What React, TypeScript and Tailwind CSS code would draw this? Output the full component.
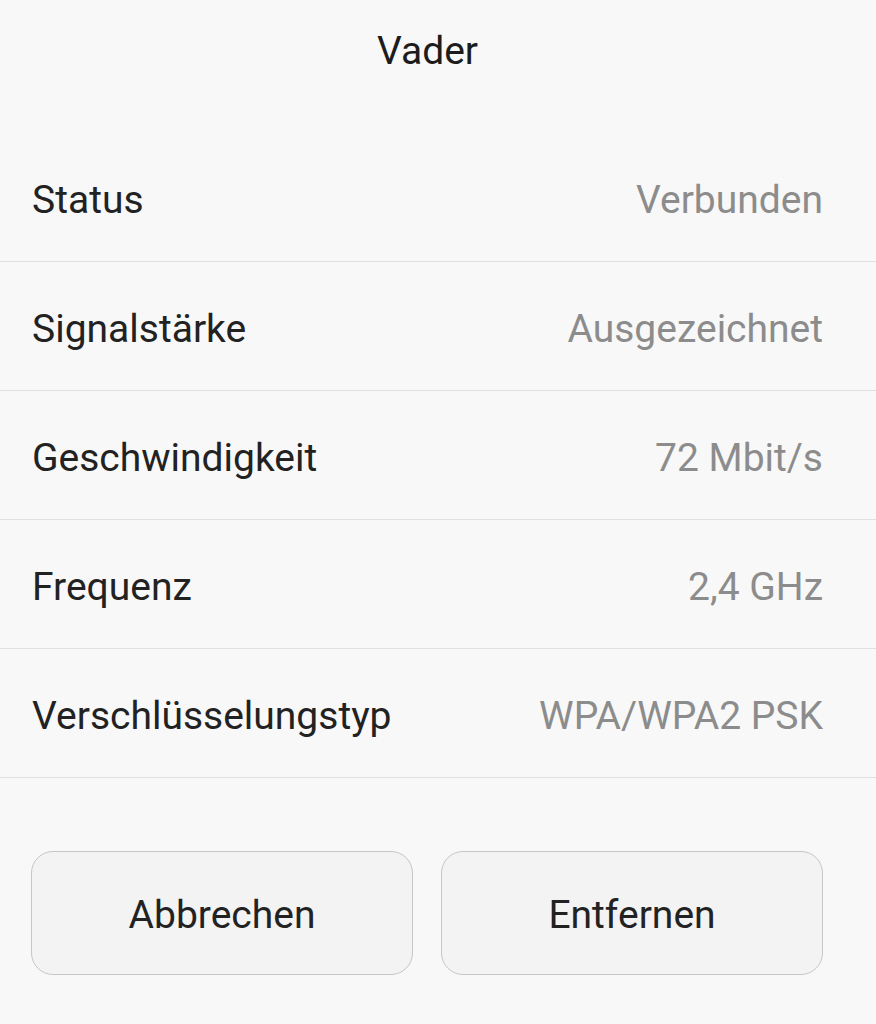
import React from "react";

const rows: [string, string][] = [
  ["Status", "Verbunden"],
  ["Signalstärke", "Ausgezeichnet"],
  ["Geschwindigkeit", "72 Mbit/s"],
  ["Frequenz", "2,4 GHz"],
  ["Verschlüsselungstyp", "WPA/WPA2 PSK"],
];

export default function App() {
  return (
    <div
      className="w-[876px] h-[1024px] bg-[#f8f8f8] overflow-hidden"
      style={{ fontFamily: "Roboto, 'Noto Sans', sans-serif" }}
    >
      <div className="pl-[32px] pr-[53px] pt-[32px] h-[133px] text-center text-[39px] leading-[39px] text-[#1c1c1c]">
        Vader
      </div>
      {rows.map(([label, value]) => (
        <div
          key={label}
          className="h-[129px] pl-[32px] pr-[53px] flex items-center justify-between border-b-[1.5px] border-[#e0e0e0] pt-[6px] text-[39px] leading-[39px]"
        >
          <span className="text-[#222222]">{label}</span>
          <span className="text-[#8c8c8c]">{value}</span>
        </div>
      ))}
      <div className="pl-[31px] pr-[53px] mt-[73px] flex gap-[28px]">
        <button className="w-[382px] h-[124px] pt-[4px] rounded-[22px] border border-[#c6c6c6] bg-[#f3f3f3] text-[39px] leading-[39px] text-[#222222] flex items-center justify-center">
          Abbrechen
        </button>
        <button className="w-[382px] h-[124px] pt-[4px] rounded-[22px] border border-[#c6c6c6] bg-[#f3f3f3] text-[39px] leading-[39px] text-[#222222] flex items-center justify-center">
          Entfernen
        </button>
      </div>
    </div>
  );
}
